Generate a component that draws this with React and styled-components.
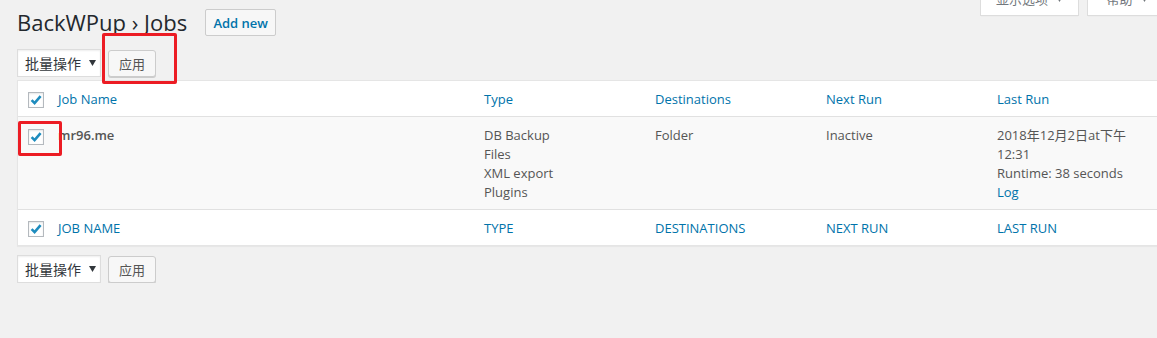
import React from "react";
import styled, { createGlobalStyle } from "styled-components";

const Global = createGlobalStyle`
  html, body { margin: 0; padding: 0; background: #f1f1f1; overflow: hidden; }
  body {
    font-family: "Open Sans", "Noto Sans CJK SC", sans-serif;
    font-size: 13px;
    color: #444;
  }
`;

const CJK = `"Open Sans", "Noto Sans CJK SC", sans-serif`;

const Page = styled.div`
  width: 1153px;
  padding-left: 17px;
  position: relative;
`;

const Header = styled.div`
  display: flex;
  align-items: center;
  margin-top: 9px;
  height: 27px;
`;

const Title = styled.h1`
  margin: 0;
  font-size: 22px;
  font-weight: 400;
  line-height: 29px;
  color: #23282d;
  padding-bottom: 1px;
`;

const AddNew = styled.a`
  margin-left: 18px;
  box-sizing: border-box;
  height: 27px;
  width: 71px;
  display: flex;
  align-items: center;
  justify-content: center;
  border: 1px solid #ccc;
  border-radius: 2px;
  background: #f7f7f7;
  color: #0073aa;
  font-weight: 600;
  font-size: 13px;
  text-decoration: none;
`;

const Tabs = styled.div`
  margin-left: auto;
  align-self: flex-start;
  margin-top: -21px;
  display: flex;
  gap: 8px;
  margin-right: 3px;
`;

const Tab = styled.div`
  box-sizing: border-box;
  width: ${(p) => p.$w}px;
  height: 28px;
  background: #fff;
  border: 1px solid #ddd;
  border-top: none;
  box-shadow: 0 1px 1px -1px rgba(0, 0, 0, 0.1);
  display: flex;
  align-items: center;
  justify-content: center;
  gap: 8px;
  color: #72777c;
  font-family: ${CJK};
  font-size: 13px;
  padding-bottom: 6px;
`;

const Arrow = () => (
  <svg width="7" height="6" viewBox="0 0 7 6">
    <path d="M0 0 H7 L3.5 6 Z" fill="currentColor" />
  </svg>
);

const TableNav = styled.div`
  display: flex;
  align-items: center;
  gap: 6px;
  margin-top: ${(p) => p.$mt}px;
  height: 28px;
`;

const Select = styled.div`
  box-sizing: border-box;
  width: 84px;
  height: 28px;
  border: 1px solid #ddd;
  background: #fff;
  box-shadow: inset 0 1px 2px rgba(0, 0, 0, 0.07);
  display: flex;
  align-items: center;
  padding-left: 7px;
  gap: 8px;
  color: #32373c;
  font-family: ${CJK};
  font-size: 14px;
`;

const ApplyWrap = styled.div`
  position: relative;
  margin-left: 1px;
`;

const Apply = styled.button`
  box-sizing: border-box;
  width: 48px;
  height: 27px;
  border: 1px solid #ccc;
  border-radius: 3px;
  background: #f7f7f7;
  box-shadow: 0 1px 0 #ccc;
  color: #555;
  font-family: ${CJK};
  font-size: 13px;
  padding: 0;
  display: flex;
  align-items: center;
  justify-content: center;
`;

const RedBox = styled.div`
  position: absolute;
  left: ${(p) => p.$l}px;
  top: ${(p) => p.$t}px;
  width: ${(p) => p.$w}px;
  height: ${(p) => p.$h}px;
  box-sizing: border-box;
  border: 3px solid #ec1c24;
  border-radius: 2px;
  pointer-events: none;
`;

const Table = styled.div`
  margin-top: 3px;
  background: #fff;
  border: 1px solid #e5e5e5;
  box-shadow: 0 1px 1px rgba(0, 0, 0, 0.04);
`;

const Row = styled.div`
  display: grid;
  grid-template-columns: 30px 426px 171px 171px 171px 1fr;
  background: ${(p) => (p.$alt ? "#f9f9f9" : "#fff")};
  border-top: ${(p) => (p.$line ? "1px solid #e1e1e1" : "none")};
`;

const CheckCell = styled.div`
  padding: ${(p) => p.$pt}px 0 0 10px;
  position: relative;
`;

const Cell = styled.div`
  padding: 9px 10px 7px;
  line-height: 19px;
  font-size: 13px;
  color: ${(p) => (p.$link ? "#0073aa" : "#555")};
  font-weight: ${(p) => (p.$bold ? 600 : 400)};
  text-transform: ${(p) => (p.$upper ? "uppercase" : "none")};
  font-family: ${CJK};
`;

const Line = styled.div`
  color: ${(p) => (p.$link ? "#0073aa" : "inherit")};
`;

const Box = styled.span`
  display: block;
  box-sizing: border-box;
  width: 16px;
  height: 16px;
  border: 1px solid #b4b9be;
  background: #fff;
  box-shadow: inset 0 1px 2px rgba(0, 0, 0, 0.1);
  position: relative;
`;

const Checkbox = () => (
  <Box>
    <svg
      width="14"
      height="14"
      viewBox="0 0 14 14"
      style={{ position: "absolute", left: 0, top: 0 }}
    >
      <path
        d="M2.6 7.2 L5.6 10.2 L11.6 3.2"
        fill="none"
        stroke="#1e8cbe"
        strokeWidth="2.6"
        strokeLinejoin="miter"
      />
    </svg>
  </Box>
);

const headers = ["Job Name", "Type", "Destinations", "Next Run", "Last Run"];

function HeadRow({ upper, line, pt }) {
  return (
    <Row $line={line}>
      <CheckCell $pt={pt}>
        <Checkbox />
      </CheckCell>
      {headers.map((h) => (
        <Cell key={h} $link $upper={upper}>
          {h}
        </Cell>
      ))}
      <div />
    </Row>
  );
}

function BulkActions({ mt, marked }) {
  return (
    <TableNav $mt={mt}>
      <Select>
        批量操作
        <Arrow />
      </Select>
      <ApplyWrap>
        <Apply>应用</Apply>
        {marked && <RedBox $l={-6} $t={-17} $w={75} $h={51} />}
      </ApplyWrap>
    </TableNav>
  );
}

export default function App() {
  return (
    <>
      <Global />
      <Page>
        <Header>
          <Title>BackWPup › Jobs</Title>
          <AddNew>Add new</AddNew>
          <Tabs>
            <Tab $w={99}>
              显示选项 <Arrow />
            </Tab>
            <Tab $w={80}>
              帮助 <Arrow />
            </Tab>
          </Tabs>
        </Header>
        <BulkActions mt={13} marked />
        <Table>
          <HeadRow pt={11} />
          <Row $alt $line>
            <CheckCell $pt={12}>
              <Checkbox />
              <RedBox $l={0} $t={4} $w={44} $h={35} />
            </CheckCell>
            <Cell $bold>mr96.me</Cell>
            <Cell>
              <Line>DB Backup</Line>
              <Line>Files</Line>
              <Line>XML export</Line>
              <Line>Plugins</Line>
            </Cell>
            <Cell>Folder</Cell>
            <Cell>Inactive</Cell>
            <Cell>
              <Line>2018年12月2日at下午</Line>
              <Line>12:31</Line>
              <Line>Runtime: 38 seconds</Line>
              <Line $link>Log</Line>
            </Cell>
            <div />
          </Row>
          <HeadRow upper line pt={11} />
        </Table>
        <BulkActions mt={9} />
      </Page>
    </>
  );
}
